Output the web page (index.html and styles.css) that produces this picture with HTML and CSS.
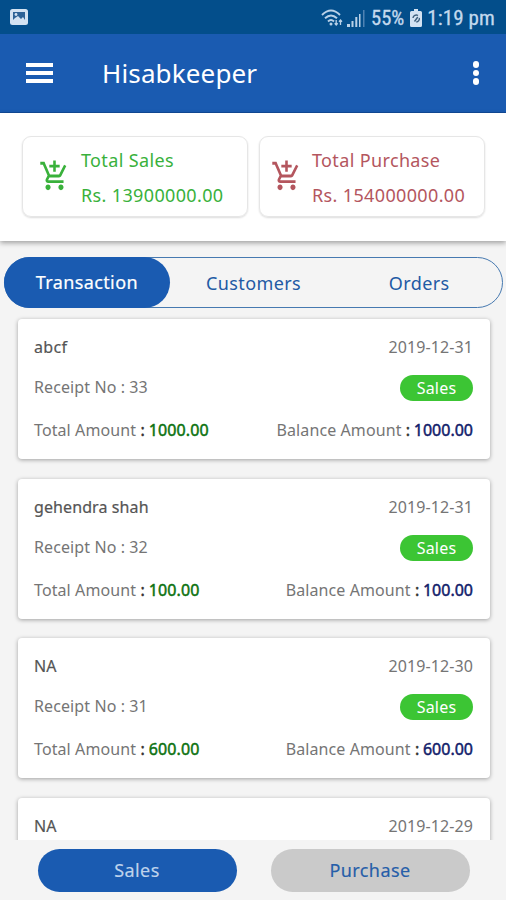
FILE: index.html
```
<!DOCTYPE html>
<html lang="en">
<head>
<meta charset="utf-8">
<title>Hisabkeeper</title>
<link rel="stylesheet" href="styles.css">
</head>
<body>
<svg class="defs" width="0" height="0">
  <symbol id="cart" viewBox="0 0 24 24" preserveAspectRatio="none"><path d="M11 9h2V6h3V4h-3V1h-2v3H8v2h3v3zm-4 9c-1.100 0-1.990.9-1.990 2S5.900 22 7 22s2-.9 2-2-.9-2-2-2zm10 0c-1.100 0-1.990.9-1.990 2s.89 2 1.990 2 2-.9 2-2-.9-2-2-2zm-9.830-3.250l.03-.12.9-1.630h7.450c.75 0 1.410-.41 1.750-1.030l3.860-7.010L19.420 4h-.01l-1.100 2-2.760 5H8.530l-.13-.27L6.160 6l-.95-2-.94-2H1v2h2l3.600 7.590-1.350 2.450c-.16.28-.25.61-.25.960 0 1.100.9 2 2 2h12v-2H7.420c-.13 0-.25-.11-.25-.25z"/></symbol>
</svg>
<div class="screen">
  <div class="status">
    <svg class="picture" viewBox="0 0 18 16"><rect width="18" height="16" rx="2.500" fill="#d3e2f2"/><path d="M3 3h12v8l-2-3-2 2-3-3-3 2-2 2z" fill="#2d6297"/><circle cx="6" cy="5.500" r="1.400" fill="#d3e2f2"/></svg>
    <div class="status-right">
      <svg class="wifi" viewBox="0 0 22 18" fill="none" stroke="#b9d1e8" stroke-width="1.900"><path d="M1 6Q10 -3 19 6M4 9.300Q10 3.500 16 9.300M7 12.500Q10 9.400 13 12.500"/><circle cx="10" cy="15" r="1.500" fill="#b9d1e8" stroke="none"/><path d="M15.200 11v5m-1.500-1.700l1.500 1.700 1.500-1.700M19.500 16v-5m-1.500 1.700l1.500-1.700 1.500 1.700" stroke-width="1.300"/></svg>
      <svg class="signal" viewBox="0 0 18 17"><path fill="#b9d1e8" d="M0 14h3v3H0zM4.500 11h2v6h-2zM8.300 7h2v10h-2zM12 4h1.500v13H12z"/><path fill="#4f82b3" d="M16 0h1.500v17H16z"/></svg>
      <span class="percent">55%</span>
      <svg class="battery" viewBox="0 0 12 18"><path fill="#d3e2f2" d="M4 0h4v2h2.500Q12 2 12 3.500v13q0 1.500-1.500 1.500h-9Q0 18 0 16.500v-13Q0 2 1.500 2H4z"/><path d="M3 9a3.300 3.300 0 0 1 5-2.500M9.300 9a3.300 3.300 0 0 1-3 4M7.800 8L4.500 12.500" fill="none" stroke="#3f5f7c" stroke-width="1.400"/></svg>
      <span class="clock">1:19 pm</span>
    </div>
  </div>
  <header class="appbar">
    <div class="menu"><i></i><i></i><i></i></div>
    <h1>Hisabkeeper</h1>
    <div class="more"><i></i><i></i><i></i></div>
  </header>
  <section class="totals">
    <div class="total sales"><svg><use href="#cart"/></svg><div><p>Total Sales</p><p>Rs. 13900000.00</p></div></div>
    <div class="total purchase"><svg><use href="#cart"/></svg><div><p>Total Purchase</p><p>Rs. 154000000.00</p></div></div>
  </section>
  <nav class="tabs"><span class="active">Transaction</span><span>Customers</span><span>Orders</span></nav>
  <main class="list">
    <article class="card">
      <div class="row"><b class="name tight">abcf</b><span>2019-12-31</span></div>
      <div class="row mid"><span>Receipt No : 33</span><span class="badge">Sales</span></div>
      <div class="row"><span>Total Amount <b class="green"><em>:</em> 1000.00</b></span><span>Balance Amount <b class="navy"><em>:</em> 1000.00</b></span></div>
    </article>
    <article class="card">
      <div class="row"><b class="name">gehendra shah</b><span>2019-12-31</span></div>
      <div class="row mid"><span>Receipt No : 32</span><span class="badge">Sales</span></div>
      <div class="row"><span>Total Amount <b class="green"><em>:</em> 100.00</b></span><span>Balance Amount <b class="navy"><em>:</em> 100.00</b></span></div>
    </article>
    <article class="card">
      <div class="row"><b class="name">NA</b><span>2019-12-30</span></div>
      <div class="row mid"><span>Receipt No : 31</span><span class="badge">Sales</span></div>
      <div class="row"><span>Total Amount <b class="green"><em>:</em> 600.00</b></span><span>Balance Amount <b class="navy"><em>:</em> 600.00</b></span></div>
    </article>
    <article class="card">
      <div class="row"><b class="name">NA</b><span>2019-12-29</span></div>
    </article>
  </main>
  <footer class="actions"><button class="primary">Sales</button><button class="secondary">Purchase</button></footer>
</div>
</body>
</html>
```
FILE: styles.css
```
* { box-sizing: border-box; margin: 0; padding: 0; }
body { background: #f4f4f4; font-family: "Noto Sans", "Open Sans", sans-serif; }
.defs { display: block; }
.screen { width: 506px; height: 900px; display: flex; flex-direction: column; overflow: hidden; }

.status { flex: none; height: 34px; padding: 0 11px 0 10px; background: #034e8b; display: flex; align-items: center; justify-content: space-between; }
.picture { width: 18px; height: 16px; }
.status-right { display: flex; align-items: center; font: 20.5px/34px "Roboto Condensed", Roboto, sans-serif; color: #c3d9ee; padding-top: 2px; -webkit-text-stroke: .3px; }
.wifi { width: 22px; height: 18px; margin-right: 4px; }
.signal { width: 18px; height: 17px; margin-right: 6px; }
.battery { width: 12px; height: 18px; margin: 0 5px 0 6px; }
.clock { font-size: 21px; letter-spacing: .1px; }

.appbar { flex: none; height: 79px; padding: 0 24px 0 26px; background: #1a5bb1; border-bottom: 1px solid #124b99; display: flex; align-items: center; color: #fff; }
.menu { width: 27px; display: flex; flex-direction: column; gap: 4.500px; }
.menu i { height: 3.500px; background: #fff; }
.appbar h1 { flex: 1; margin: 0 0 0 49px; font-size: 26px; font-weight: 400; letter-spacing: .15px; }
.more { display: flex; flex-direction: column; gap: 2px; padding-right: 3px; }
.more i { width: 6.500px; height: 6.500px; border-radius: 50%; background: #fff; }

.totals { flex: none; height: 128px; padding: 23px 21px 24px 22px; background: #fff; display: flex; gap: 11px; box-shadow: 0 2px 5px rgba(0,0,0,.35); }
.total { flex: none; width: 226px; border: 1px solid #e6e6e6; border-radius: 9px; display: flex; padding: 6px 0 0 16px; box-shadow: 0 1px 2px rgba(0,0,0,.14); font-size: 18px; line-height: 35px; letter-spacing: .36px; }
.total svg { flex: none; width: 31px; height: 34px; margin: 16px 11px 0 0; fill: currentColor; }
.purchase.total { padding-left: 11px; }
.purchase svg { margin-right: 10px; }
.sales { color: #39b13b; }
.purchase { color: #b4565e; }

.tabs { flex: none; width: 499px; height: 51px; margin: 16px 0 0 4px; border: 1px solid #4679b0; border-radius: 26px; display: flex; font-size: 18px; line-height: 51px; letter-spacing: .4px; color: #225aa4; }
.tabs span { width: 33.333%; text-align: center; padding-left: 2px; }
.tabs .active { background: #1a5bb1; color: #fff; border-radius: 26px; margin: -1px 0 -1px -1px; padding-left: 0; -webkit-text-stroke: .2px; }

.list { flex: 1; min-height: 0; overflow: hidden; padding: 11px 16px 0 17.500px; display: flex; flex-direction: column; gap: 19.600px; }
.card { flex: none; height: 140px; padding: 14px 17px 0 16.500px; background: #fff; border-radius: 4px; box-shadow: 0 1px 4px rgba(0,0,0,.35); font-size: 16px; letter-spacing: .1px; color: #757575; }
.row { display: flex; justify-content: space-between; height: 26px; line-height: 28px; white-space: pre; }
.mid { margin: 15px 0 16px; line-height: 27px; }
.name { font-weight: 400; color: #555; -webkit-text-stroke: .2px; }
.tight { letter-spacing: .3px; }
.badge { width: 73px; height: 26px; margin-top: 1px; border-radius: 13px; background: #3cc534; color: #fff; text-align: center; letter-spacing: .2px; }
.green, .navy { font-weight: 400; letter-spacing: 0; -webkit-text-stroke: .45px; }
.green { color: #0b720f; letter-spacing: .15px; }
.navy { color: #10206a; }
.card em { font-style: normal; color: #333; margin-right: -.5px; }

.actions { flex: none; height: 60px; padding: 9px 36.500px 0 37.500px; display: flex; justify-content: space-between; }
.actions button { width: 199px; height: 43px; border: 0; border-radius: 22px; font: 18px/43px "Noto Sans", sans-serif; letter-spacing: .4px; -webkit-text-stroke: .15px; }
.primary { background: #1a5bb1; color: #bfd3ec; }
.secondary { background: #cacaca; color: #265ea9; }
```
